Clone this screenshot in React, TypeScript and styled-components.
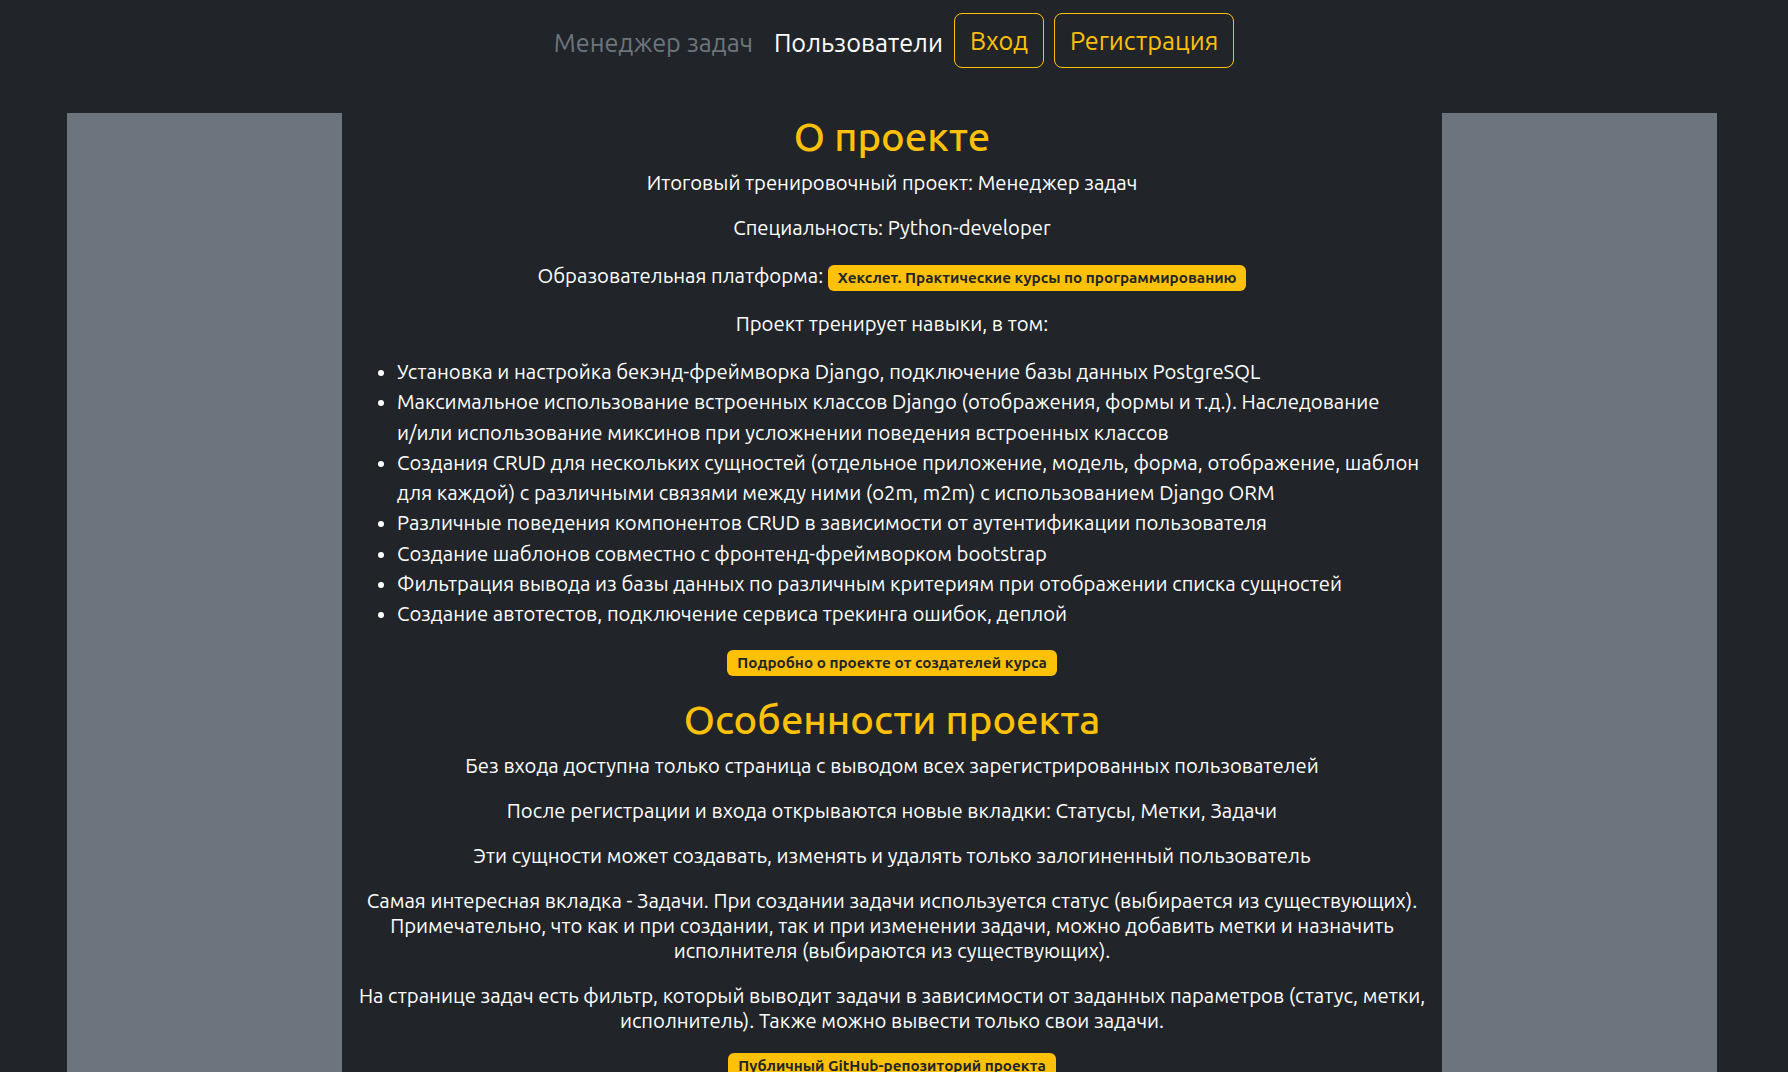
import React from "react";
import styled, { createGlobalStyle } from "styled-components";

const FONT = `"Ubuntu", "Open Sans", "Noto Sans", sans-serif`;

const GlobalStyle = createGlobalStyle`
  html, body {
    margin: 0;
    padding: 0;
    background: #212529;
  }
  body {
    font-family: ${FONT};
    color: #fff;
    -webkit-font-smoothing: antialiased;
  }
  * {
    box-sizing: border-box;
  }
`;

const Navbar = styled.nav`
  display: flex;
  justify-content: center;
  align-items: center;
  padding: 13px 0 45px;
  font-size: 25.3px;
`;

const NavLink = styled.a<{ $active?: boolean }>`
  color: ${(p) => (p.$active ? "#fff" : "#6c757d")};
  text-decoration: none;
  line-height: 36px;
  padding-top: 4px;
  margin-right: ${(p) => (p.$active ? "11px" : "21px")};
`;

const NavButton = styled.a`
  display: inline-block;
  color: #ffc107;
  border: 1px solid #ffc107;
  border-radius: 8px;
  padding: 8px 15px;
  font-size: 25.3px;
  line-height: 37px;
  text-decoration: none;
  margin-right: 10px;

  &:last-child {
    margin-right: 0;
  }
`;

const Row = styled.div`
  display: grid;
  grid-template-columns: 275px 1100px 275px;
  margin-left: 67px;
  width: 1650px;
  min-height: 1000px;
`;

const SideColumn = styled.div`
  background: #6c757d;
`;

const MainColumn = styled.main`
  padding: 0 12px;
  text-align: center;
`;

const Heading = styled.h1`
  margin: 0 0 9px;
  font-size: 40px;
  font-weight: 500;
  line-height: 48px;
  color: #ffc107;
`;

const Text = styled.p<{ $tall?: boolean }>`
  margin: 0 0 20px;
  font-size: 20.3px;
  line-height: ${(p) => (p.$tall ? "31px" : "25px")};
`;

const SkillList = styled.ul`
  margin: 21px 0 20px;
  padding-left: 43px;
  text-align: left;
  font-size: 20.3px;
  line-height: 30.3px;
`;

const NoWrap = styled.span`
  white-space: nowrap;
`;

const Badge = styled.a`
  display: inline-block;
  background: #ffc107;
  color: #212529;
  font-size: 15.25px;
  font-weight: 700;
  line-height: 16px;
  padding: 5px 10px;
  border-radius: 6px;
  text-decoration: none;
`;

const BadgeRow = styled.div`
  margin: 0 0 20px;
`;

const skills: React.ReactNode[] = [
  "Установка и настройка бекэнд-фреймворка Django, подключение базы данных PostgreSQL",
  <>
    Максимальное использование встроенных классов Django (отображения, формы и т.д.). Наследование{" "}
    <NoWrap>и/или</NoWrap> использование миксинов при усложнении поведения встроенных классов
  </>,
  "Создания CRUD для нескольких сущностей (отдельное приложение, модель, форма, отображение, шаблон для каждой) с различными связями между ними (o2m, m2m) с использованием Django ORM",
  "Различные поведения компонентов CRUD в зависимости от аутентификации пользователя",
  "Создание шаблонов совместно с фронтенд-фреймворком bootstrap",
  "Фильтрация вывода из базы данных по различным критериям при отображении списка сущностей",
  "Создание автотестов, подключение сервиса трекинга ошибок, деплой",
];

const features = [
  "Без входа доступна только страница с выводом всех зарегистрированных пользователей",
  "После регистрации и входа открываются новые вкладки: Статусы, Метки, Задачи",
  "Эти сущности может создавать, изменять и удалять только залогиненный пользователь",
  "Самая интересная вкладка - Задачи. При создании задачи используется статус (выбирается из существующих). Примечательно, что как и при создании, так и при изменении задачи, можно добавить метки и назначить исполнителя (выбираются из существующих).",
  "На странице задач есть фильтр, который выводит задачи в зависимости от заданных параметров (статус, метки, исполнитель). Также можно вывести только свои задачи.",
];

export default function App() {
  return (
    <>
      <GlobalStyle />
      <Navbar>
        <NavLink href="#">Менеджер задач</NavLink>
        <NavLink href="#" $active>
          Пользователи
        </NavLink>
        <NavButton href="#">Вход</NavButton>
        <NavButton href="#">Регистрация</NavButton>
      </Navbar>
      <Row>
        <SideColumn />
        <MainColumn>
          <Heading>О проекте</Heading>
          <Text>Итоговый тренировочный проект: Менеджер задач</Text>
          <Text>Специальность: Python-developer</Text>
          <Text $tall>
            Образовательная платформа:{" "}
            <Badge href="#">Хекслет. Практические курсы по программированию</Badge>
          </Text>
          <Text>Проект тренирует навыки, в том:</Text>
          <SkillList>
            {skills.map((s, i) => (
              <li key={i}>{s}</li>
            ))}
          </SkillList>
          <BadgeRow>
            <Badge href="#">Подробно о проекте от создателей курса</Badge>
          </BadgeRow>
          <Heading>Особенности проекта</Heading>
          {features.map((f) => (
            <Text key={f}>{f}</Text>
          ))}
          <BadgeRow>
            <Badge href="#">Публичный GitHub-репозиторий проекта</Badge>
          </BadgeRow>
        </MainColumn>
        <SideColumn />
      </Row>
    </>
  );
}
